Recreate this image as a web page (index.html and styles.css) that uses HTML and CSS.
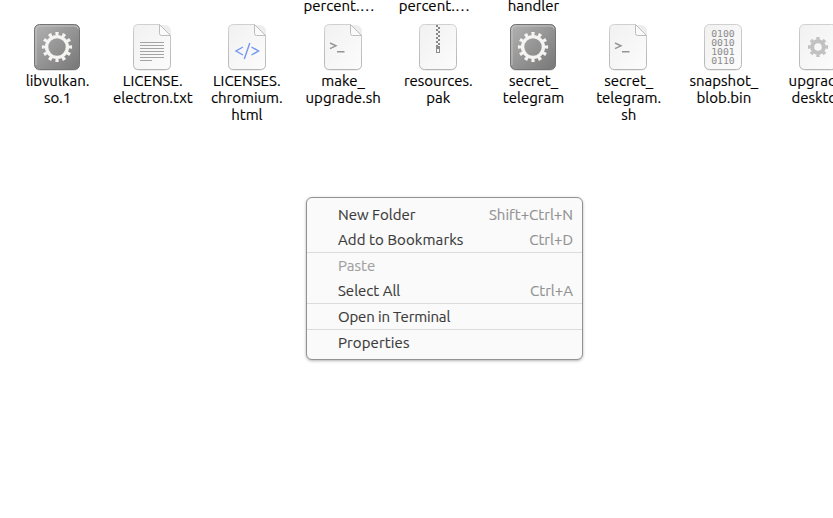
FILE: index.html
```html
<!DOCTYPE html>
<html lang="en">
<head>
<meta charset="utf-8">
<title>Files</title>
<link rel="stylesheet" href="styles.css">
</head>
<body>
<svg class="defs" aria-hidden="true">
  <defs>
    <linearGradient id="steel" x1="0" y1="0" x2="1" y2="1"><stop offset="0" stop-color="#b2b2b2"/><stop offset="1" stop-color="#777"/></linearGradient>
    <linearGradient id="paper" x1="0" y1="0" x2="1" y2="1"><stop offset="0" stop-color="#f1f1f1"/><stop offset="1" stop-color="#fcfcfc"/></linearGradient>
    <linearGradient id="edge" x1="0" y1="0" x2="0" y2="1"><stop offset="0" stop-color="#d0d0d0"/><stop offset="1" stop-color="#b5b5b5"/></linearGradient>
    <symbol id="exec" viewBox="0 0 48 48">
      <rect x="1" y="2" width="46" height="46" rx="6" fill="#000" opacity=".12"/>
      <rect x="1.5" y="1.5" width="45" height="45" rx="5" fill="url(#steel)" stroke="#747474"/>
      <path d="M3 42V7Q3 3 7 3H41Q45 3 45 6" fill="none" stroke="#c9c9c9" stroke-width=".8"/>
      <circle cx="24" cy="24" r="10.4" fill="none" stroke="#f5f4f2" stroke-width="3.4"/>
      <circle cx="24" cy="24" r="13.2" fill="none" stroke="#f5f4f2" stroke-width="3.8" pathLength="120" stroke-dasharray="4.6 5.4" stroke-dashoffset="2.3"/>
    </symbol>
    <symbol id="sheet" viewBox="0 0 48 48">
      <rect x="5" y="2" width="38" height="46" rx="6" fill="#000" opacity=".07"/>
      <path d="M10.5 1.5H31.5L42.5 12.5V41.5Q42.5 46.5 37.5 46.5H10.5Q5.5 46.5 5.5 41.5V6.5Q5.5 1.5 10.5 1.5Z" fill="url(#paper)" stroke="url(#edge)"/>
      <path d="M31.5 1.5V10.5Q31.5 12.5 33.5 12.5H42.5Z" fill="#fafafa" stroke="#bdbdbd"/>
    </symbol>
    <symbol id="card" viewBox="0 0 48 48">
      <rect x="5" y="2" width="38" height="46" rx="6" fill="#000" opacity=".07"/>
      <rect x="5.5" y="1.5" width="37" height="45" rx="5" fill="url(#paper)" stroke="url(#edge)"/>
    </symbol>
    <symbol id="shell" viewBox="0 0 48 48">
      <use href="#sheet"/>
      <path d="M11 20L17 22.8L11 25.6M18 28.8H25.5" fill="none" stroke="#949494" stroke-width="1.4"/>
    </symbol>
  </defs>
</svg>
<main class="files">
  <div class="row previous">
    <div class="file"></div><div class="file"></div><div class="file"></div>
    <div class="file clipped"><p>percent.…</p></div>
    <div class="file clipped"><p>percent.…</p></div>
    <div class="file"><p>handler</p></div>
  </div>
  <div class="row">
    <div class="file"><svg><use href="#exec"/></svg><p>libvulkan.<br>so.1</p></div>
    <div class="file"><svg viewBox="0 0 48 48"><use href="#sheet"/><path d="M12 19.5H36M12 22.5H36M12 25.5H36M12 28.5H36M12 31.5H36M12 34.5H36M12 37.5H24" stroke="#a4a4a4"/></svg><p>LICENSE.<br>electron.txt</p></div>
    <div class="file"><svg viewBox="0 0 48 48"><use href="#sheet"/><path d="M20 24L13 28L20 32M28.5 24L35.5 28L28.5 32M26.8 20L21.3 36" fill="none" stroke="#7597f0" stroke-width="1.4"/></svg><p class="long">LICENSES.<br>chromium.<br>html</p></div>
    <div class="file"><svg><use href="#shell"/></svg><p>make_<br>upgrade.sh</p></div>
    <div class="file"><svg viewBox="0 0 48 48"><use href="#card"/><path d="M23 2V23" stroke="#888" stroke-width="2" stroke-dasharray="2"/><path d="M25 4V23" stroke="#888" stroke-width="2" stroke-dasharray="2"/><path d="M22 23H26V30H22ZM23 26V29H25V26Z" fill="#8c8c8c" fill-rule="evenodd"/></svg><p>resources.<br>pak</p></div>
    <div class="file"><svg><use href="#exec"/></svg><p>secret_<br>telegram</p></div>
    <div class="file"><svg><use href="#shell"/></svg><p>secret_<br>telegram.<br>sh</p></div>
    <div class="file"><svg viewBox="0 0 48 48"><use href="#card"/><g class="bits"><text x="12.2" y="14" textLength="23.6" lengthAdjust="spacingAndGlyphs">0100</text><text x="12.2" y="23" textLength="23.6" lengthAdjust="spacingAndGlyphs">0010</text><text x="12.2" y="32" textLength="23.6" lengthAdjust="spacingAndGlyphs">1001</text><text x="12.2" y="41" textLength="23.6" lengthAdjust="spacingAndGlyphs">0110</text></g></svg><p>snapshot_<br>blob.bin</p></div>
    <div class="file"><svg viewBox="0 0 48 48"><use href="#card"/><circle cx="24" cy="24" r="5.8" fill="none" stroke="#c1c1c1" stroke-width="4"/><circle cx="24" cy="24" r="8.5" fill="none" stroke="#c1c1c1" stroke-width="3" pathLength="80" stroke-dasharray="5 5" stroke-dashoffset="2.5"/></svg><p class="last">upgrade_<br>desktop.</p></div>
  </div>
</main>
<nav class="menu">
  <div class="group">
    <div class="item"><span>New Folder</span><kbd>Shift+Ctrl+N</kbd></div>
    <div class="item loose"><span>Add to Bookmarks</span><kbd>Ctrl+D</kbd></div>
  </div>
  <div class="group">
    <div class="item disabled"><span>Paste</span></div>
    <div class="item"><span>Select All</span><kbd>Ctrl+A</kbd></div>
  </div>
  <div class="group"><div class="item tight"><span>Open in Terminal</span></div></div>
  <div class="group"><div class="item loose"><span>Properties</span></div></div>
</nav>
</body>
</html>
```
FILE: styles.css
```css
* { box-sizing: border-box; }
body { margin: 0; height: 518px; overflow: hidden; background: #fff; color: #000; font: 15px/17px "Ubuntu", "Noto Sans", sans-serif; -webkit-text-stroke: .15px currentColor; }
.defs { position: absolute; width: 0; height: 0; }
.files { height: 518px; overflow: hidden; }
.row { display: grid; grid-template-columns: repeat(9, 95.2px); margin-left: 9.4px; }
.previous { height: 23px; }
.previous p { margin-top: -3px; }
.file { display: flex; flex-direction: column; align-items: center; text-align: center; }
.clipped { padding-right: 8px; }
.file svg { width: 48px; height: 48px; }
.file p { margin-bottom: 0; padding-left: 1.2px; white-space: nowrap; }
.file .long { padding-left: 0; padding-right: 1px; }
.file .last { padding-left: 4px; }
.row:not(.previous) p { margin-top: 1px; }
.bits { font: 8.5px "DejaVu Sans Mono", monospace; fill: #8c8c8c; -webkit-text-stroke: 0; }
.menu { position: absolute; left: 306px; top: 197px; width: 277px; height: 163px; padding-top: 4px; background: #fafafa; border: 1px solid #929292; border-radius: 6px; box-shadow: 0 1px 3px rgba(0, 0, 0, .3); color: #3b3b3b; }
.group + .group { border-top: 1px solid #dcdcdc; }
.item { display: flex; justify-content: space-between; align-items: center; height: 25px; padding: 0 9px 1px 31px; }
.item kbd { font: inherit; letter-spacing: 0; color: #929292; }
.disabled { color: #a0a0a0; }
.loose { letter-spacing: .1px; }
.tight { letter-spacing: -.16px; }
```
